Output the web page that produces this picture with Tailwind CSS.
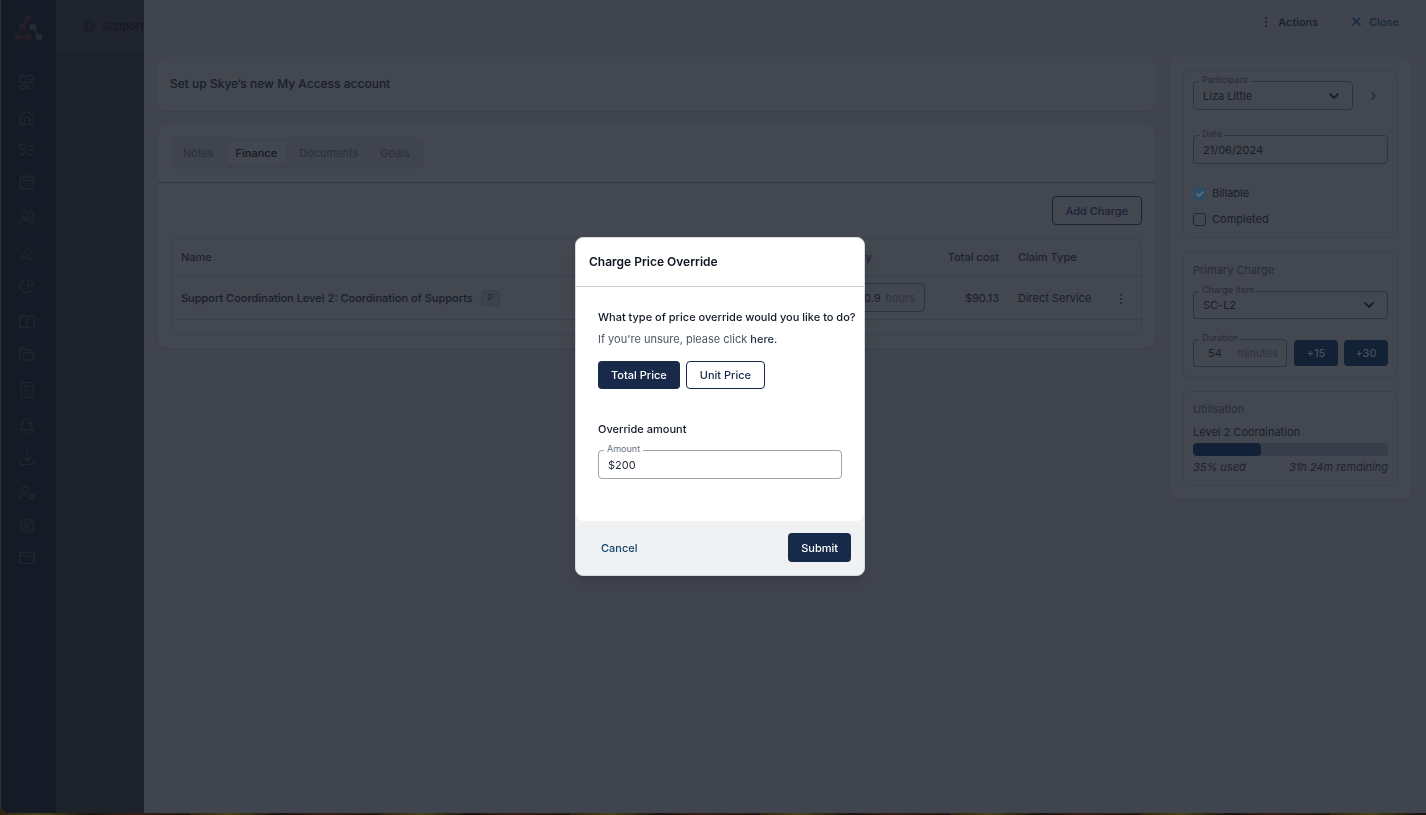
<!DOCTYPE html>
<html lang="en">

<head>
    <title>Support - Charge Price Override</title>

    <!-- Tailwind css-->
    <meta charset="UTF-8">
    <meta name="viewport" content="width=device-width, initial-scale=1.0">
    <script src="https://cdn.jsdelivr.net/npm/@tailwindcss/browser@4"></script>
</head>

<body class="h-screen overflow-hidden bg-[repeating-linear-gradient(90deg,#33240f_0px,#4a4213_40px,#1c160f_90px,#3a1f12_130px,#241a10_190px)] pb-[2px] font-['Inter',sans-serif] text-[11px] leading-4 text-[#191e2b]">

    <div class="flex h-full overflow-hidden rounded-bl-lg border-l border-[#2b303a] bg-[#1e222b]">

        <!-- Sidebar -->
        <nav class="flex w-[55px] shrink-0 flex-col items-center bg-[#151b26] pr-[3px] pt-3 text-[#202631]">
            <a href="#" aria-label="Home page" class="mb-[22px] flex h-8 items-center">
                <svg class="size-8" viewBox="0 0 32 32" fill="none" stroke-width="1.500">
                    <g stroke="#271f27" fill="#271f27">
                        <path d="M17 6 11.500 15 6 25h11" fill="none" />
                        <circle cx="17" cy="6" r="2.500" />
                        <circle cx="11.500" cy="15" r="2.500" />
                        <circle cx="6" cy="25" r="2.500" />
                        <circle cx="17" cy="25" r="2.500" />
                    </g>
                    <g stroke="#262c37" fill="#262c37">
                        <path d="M22 15l6 10" />
                        <circle cx="22" cy="15" r="2.500" />
                        <circle cx="28" cy="25" r="2.500" />
                    </g>
                </svg>
            </a>
            <div class="flex flex-col gap-1">
                <div>
                    <a href="#" aria-label="Dashboard" class="flex h-8 items-center"><svg class="size-4" viewBox="0 0 24 24" fill="none" stroke="currentColor" stroke-width="2"><rect x="2" y="2" width="8" height="11" rx="1" /><rect x="14" y="2" width="8" height="6" rx="1" /><rect x="14" y="12" width="8" height="10" rx="1" /><rect x="2" y="17" width="8" height="5" rx="1" /></svg></a>
                </div>
                <div>
                    <a href="#" aria-label="Home" class="flex h-8 items-center"><svg class="size-4" viewBox="0 0 24 24" fill="none" stroke="currentColor" stroke-width="2" stroke-linejoin="round"><path d="M2 9l10-7 10 7v11a2 2 0 0 1-2 2H4a2 2 0 0 1-2-2z" /><path d="M8 22v-7a4 4 0 0 1 8 0v7" /></svg></a>
                    <a href="#" aria-label="Tasks" class="flex h-8 items-center"><svg class="size-4" viewBox="0 0 24 24" fill="none" stroke="currentColor" stroke-width="2" stroke-linecap="round"><rect x="2" y="3" width="7" height="7" rx="1" /><path d="m2 17 3 3 5-5M13 5h9M13 12h9M13 19h9" /></svg></a>
                    <a href="#" aria-label="Calendar" class="flex h-8 items-center"><svg class="size-4" viewBox="0 0 24 24" fill="none" stroke="currentColor" stroke-width="2" stroke-linecap="round"><rect x="2" y="4" width="20" height="18" rx="2" /><path d="M7 1v5M17 1v5M12 1v5M2 10h20M7 14h.01M12 14h.01M17 14h.01M7 18h.01M12 18h.01M17 18h.01" /></svg></a>
                </div>
                <div>
                    <a href="#" aria-label="Participants" class="flex h-8 items-center"><svg class="size-4" viewBox="0 0 24 24" fill="none" stroke="currentColor" stroke-width="2" stroke-linecap="round"><circle cx="9" cy="7" r="5" /><path d="M1 22v-3a4 4 0 0 1 4-4h8a4 4 0 0 1 4 4v3M23 22v-3a4 4 0 0 0-3-4M17 2a5 5 0 0 1 0 10" /></svg></a>
                </div>
                <div>
                    <a href="#" aria-label="Signatures" class="flex h-8 items-center"><svg class="size-4" viewBox="0 0 24 24" fill="none" stroke="#1d232e" stroke-width="2" stroke-linecap="round" stroke-linejoin="round"><path d="M4 16 15 3a3 3 0 0 1 5 4L9 19l-5 2c-3-1 1-6 5-7s3 8 7 7 1-3 3-3 1 3 3 2" /></svg></a>
                    <a href="#" aria-label="Reports" class="flex h-8 items-center"><svg class="size-4" viewBox="0 0 24 24" fill="none" stroke="currentColor" stroke-width="2" stroke-linejoin="round"><path d="M13 2a10 10 0 0 1 9 10h-9z" /><path d="M8 3a10 10 0 1 0 13 13" /></svg></a>
                </div>
                <div>
                    <a href="#" aria-label="Price guide" class="flex h-8 items-center"><svg class="size-4" viewBox="0 0 24 24" fill="none" stroke="currentColor" stroke-width="2" stroke-linejoin="round"><path d="M1 3h7a4 4 0 0 1 4 3 4 4 0 0 1 4-3h7v17h-8a3 3 0 0 0-3 2 3 3 0 0 0-3-2H1zM12 6v16" /></svg></a>
                    <a href="#" aria-label="Files" class="flex h-8 items-center"><svg class="size-4" viewBox="0 0 24 24" fill="none" stroke="currentColor" stroke-width="2" stroke-linejoin="round"><path d="M19 21H4a3 3 0 0 1-3-3V3h7l3 3h8v4" /><path d="m5 17 2-5a3 3 0 0 1 3-2h13l-2 9a2 2 0 0 1-2 2" /></svg></a>
                </div>
                <div>
                    <a href="#" aria-label="Calculator" class="flex h-8 items-center"><svg class="size-4" viewBox="0 0 24 24" fill="none" stroke="currentColor" stroke-width="2" stroke-linecap="round"><rect x="3" y="1" width="18" height="22" rx="2" /><path d="M8 6h8M8 11h.01M12 11h.01M16 11h.01M8 15h.01M12 15h.01M16 15v4M8 19h4" /></svg></a>
                </div>
                <div>
                    <a href="#" aria-label="Reminders" class="flex h-8 items-center"><svg class="size-4" viewBox="0 0 24 24" fill="none" stroke="currentColor" stroke-width="2" stroke-linecap="round"><path d="M14 2a7 7 0 0 0-9 7c0 6-3 9-3 9h20s-2-2-3-5M10 23h4M18 4v8M14 8h8" /></svg></a>
                    <a href="#" aria-label="Downloads" class="flex h-8 items-center"><svg class="size-4" viewBox="0 0 24 24" fill="none" stroke="currentColor" stroke-width="2" stroke-linecap="round"><path d="M12 2v13M6 10l6 6 6-6M2 16v4a2 2 0 0 0 2 2h16a2 2 0 0 0 2-2v-4" /></svg></a>
                </div>
                <div>
                    <a href="#" aria-label="User settings" class="flex h-8 items-center"><svg class="size-4" viewBox="0 0 24 24" fill="none" stroke="currentColor" stroke-width="2" stroke-linecap="round"><circle cx="9" cy="6" r="5" /><path d="M1 22v-3a4 4 0 0 1 4-4h5" /><circle cx="19" cy="16" r="3" stroke-width="3" /></svg></a>
                    <a href="#" aria-label="Settings" class="flex h-8 items-center"><svg class="size-4" viewBox="0 0 24 24" fill="none" stroke="currentColor" stroke-width="2" stroke-linejoin="round"><circle cx="12" cy="12" r="3" /><path d="M10 2h4l1 3 2 1 3-1 2 4-2 2v2l2 2-2 4-3-1-2 1-1 3h-4l-1-3-2-1-3 1-2-4 2-2v-2L2 9l2-4 3 1 2-1z" /></svg></a>
                    <a href="#" aria-label="Billing" class="flex h-8 items-center"><svg class="size-4" viewBox="0 0 24 24" fill="none" stroke="currentColor" stroke-width="2"><rect x="1" y="4" width="22" height="16" rx="1" /><path d="M1 9h22" /></svg></a>
                </div>
            </div>
        </nav>

        <!-- Page behind the drawer -->
        <div class="w-[88px] shrink-0 overflow-hidden">
            <div class="flex h-[52px] items-center gap-[7px] border-b border-[#1c2029] bg-[#20242d] pl-[27px] text-[#131822]">
                <svg class="size-3 shrink-0" viewBox="0 0 24 24" fill="none" stroke="currentColor" stroke-width="2"><circle cx="12" cy="12" r="11" /><circle cx="12" cy="12" r="5" /><path d="m4 4 4 4M20 4l-4 4M4 20l4-4M20 20l-4-4" /></svg>
                <span>Support</span>
            </div>
        </div>

        <!-- Drawer -->
        <div class="flex min-w-0 flex-1 flex-col bg-[#40444e]">
            <header class="flex h-11 shrink-0 items-center justify-end gap-8 border-b border-t border-[#3c404a] pr-[27px] font-medium">
                <button class="flex items-center gap-[6px]">
                    <svg class="size-3" viewBox="0 0 12 12" fill="currentColor"><circle cx="6" cy="2" r="1" /><circle cx="6" cy="6" r="1" /><circle cx="6" cy="10" r="1" /></svg>
                    Actions
                </button>
                <button class="flex items-center gap-[7px] text-[#18293b]">
                    <svg class="size-3" viewBox="0 0 12 12" fill="none" stroke="currentColor" stroke-width="1.500" stroke-linecap="round"><path d="m3 2 7 7M10 2l-7 7" /></svg>
                    Close
                </button>
            </header>

            <div class="flex items-start gap-3.5 pl-[13px] pr-[15px] pt-[13px]">
                <main class="flex min-w-0 flex-1 flex-col gap-3.5">
                    <section class="flex h-[54px] items-center rounded-lg bg-[#43474f] px-[13px] shadow-xs">
                        <h1 class="text-xs font-medium">Set up Skye’s new My Access account</h1>
                    </section>

                    <section class="mx-px rounded-lg bg-[#43474f] shadow-xs">
                        <div class="border-b border-[#323743] px-[13px] pb-[13px] pt-3">
                            <div role="tablist" class="inline-flex gap-[5px] rounded-md bg-[#40444e] p-1 text-[#2a2f3b]">
                                <button role="tab" class="h-6 rounded px-2">Notes</button>
                                <button role="tab" aria-selected="true" class="h-6 rounded bg-[#43474f] px-[9px] font-medium text-[#141924] shadow-xs">Finance</button>
                                <button role="tab" class="h-6 rounded px-2">Documents</button>
                                <button role="tab" class="h-6 rounded px-[9px]">Goals</button>
                            </div>
                        </div>

                        <div class="flex flex-col gap-[13px] p-[13px]">
                            <button class="h-[29px] self-end rounded border border-[#1c2538] px-[13px] font-medium text-[#1c2338]">Add Charge</button>

                            <div class="rounded-md border border-[#3c414c] pb-3.5">
                                <table class="w-full table-fixed text-left">
                                    <thead>
                                        <tr class="h-[37px] border-b border-[#3a3f4b] text-[#1e2330]">
                                            <th class="px-[9px] font-medium">Name</th>
                                            <th class="w-20 px-[10px] font-medium">Unit price</th>
                                            <th class="w-[118px] px-[10px] font-medium">Quantity</th>
                                            <th class="w-[74px] whitespace-nowrap px-[10px] text-right font-medium">Total cost</th>
                                            <th class="w-[91px] px-[9px] font-medium">Claim Type</th>
                                            <th class="w-[41px]"></th>
                                        </tr>
                                    </thead>
                                    <tbody>
                                        <tr class="h-[43px] border-b border-[#3a3f4b]">
                                            <td class="px-[9px] font-medium">
                                                <div class="flex items-center gap-2">
                                                    Support Coordination Level 2: Coordination of Supports
                                                    <span class="rounded-sm border border-[#383d49] bg-[#3e424d] px-[6px] text-[9px] leading-[14px] text-[#222835]">P</span>
                                                </div>
                                            </td>
                                            <td class="px-[10px]">$100.14</td>
                                            <td class="px-[10px]">
                                                <div class="flex h-[29px] items-center rounded border border-[#2d3340] px-[9px]">
                                                    <input type="text" aria-label="Quantity" value="0.9" class="w-full min-w-0 pl-[27px] outline-none">
                                                    <span class="text-[#2f3440]">hours</span>
                                                </div>
                                            </td>
                                            <td class="px-[10px] text-right">$90.13</td>
                                            <td class="whitespace-nowrap px-[9px]">Direct Service</td>
                                            <td class="text-center">
                                                <button aria-label="Charge actions" class="align-middle text-[#16273a]"><svg class="size-3" viewBox="0 0 12 12" fill="currentColor"><circle cx="6" cy="2" r="1" /><circle cx="6" cy="6" r="1" /><circle cx="6" cy="10" r="1" /></svg></button>
                                            </td>
                                        </tr>
                                    </tbody>
                                </table>
                            </div>
                        </div>
                    </section>
                </main>

                <aside class="flex w-[241px] shrink-0 flex-col gap-[13px] rounded-lg bg-[#43474f] p-[13px] shadow-xs">
                    <section class="rounded-md border border-[#3c414c] px-[9px] py-[10px]">
                        <div class="flex items-center gap-3.5">
                            <div class="relative flex-1">
                                <label for="participant" class="absolute -top-[9px] left-[6px] bg-[#43474f] px-[3px] text-[9px] text-[#272c38]">Participant</label>
                                <select id="participant" class="h-[29px] w-full appearance-none rounded border border-[#2d3340] px-[9px]">
                                    <option>Liza Little</option>
                                </select>
                                <svg class="pointer-events-none absolute right-[13px] top-[9px] size-3" viewBox="0 0 12 12" fill="none" stroke="currentColor" stroke-width="1.800" stroke-linecap="round" stroke-linejoin="round"><path d="m2 4 4 4 4-4" /></svg>
                            </div>
                            <button aria-label="Open participant" class="mr-[9px] text-[#18293b]"><svg class="size-3" viewBox="0 0 12 12" fill="none" stroke="currentColor" stroke-width="1.200" stroke-linecap="round" stroke-linejoin="round"><path d="m5 3 3 3-3 3" /></svg></button>
                        </div>
                        <div class="relative mt-[25px]">
                            <label for="date" class="absolute -top-[9px] left-[6px] bg-[#43474f] px-[3px] text-[9px] text-[#272c38]">Date</label>
                            <input id="date" type="text" value="21/06/2024" class="block h-[29px] w-full rounded border border-[#2d3340] px-[9px]">
                        </div>
                        <label class="mt-[21px] flex items-center gap-[6px]">
                            <input type="checkbox" checked class="absolute size-[13px] appearance-none">
                            <svg class="size-[13px] rounded-[3px] bg-[#2d4d64]" viewBox="0 0 13 13" fill="none" stroke="#5d6974" stroke-width="1.800" stroke-linecap="round" stroke-linejoin="round"><path d="m4 7 2 2 4-4" /></svg>
                            Billable
                        </label>
                        <label class="mt-[10px] flex items-center gap-[6px]">
                            <input type="checkbox" class="size-[13px] appearance-none rounded-[3px] border border-[#202636]">
                            Completed
                        </label>
                    </section>

                    <section class="rounded-md border border-[#3c414c] px-[9px] py-[10px]">
                        <h2 class="text-[#272c38]">Primary Charge</h2>
                        <div class="relative mt-[13px]">
                            <label for="charge" class="absolute -top-[9px] left-[6px] bg-[#43474f] px-[3px] text-[9px] text-[#272c38]">Charge Item</label>
                            <select id="charge" class="block h-7 w-full appearance-none rounded border border-[#2d3340] px-[9px]">
                                <option>SC-L2</option>
                            </select>
                            <svg class="pointer-events-none absolute right-[13px] top-2 size-3" viewBox="0 0 12 12" fill="none" stroke="currentColor" stroke-width="1.800" stroke-linecap="round" stroke-linejoin="round"><path d="m2 4 4 4 4-4" /></svg>
                        </div>
                        <div class="mt-5 flex items-center gap-[6px]">
                            <div class="relative mr-px flex h-7 flex-1 items-center rounded border border-[#2d3340] pl-3.5 pr-2">
                                <label for="duration" class="absolute -top-[10px] left-[5px] bg-[#43474f] px-[3px] text-[9px] text-[#272c38]">Duration</label>
                                <input id="duration" type="text" value="54" class="w-full min-w-0 outline-none">
                                <span class="text-[#2f3440]">minutes</span>
                            </div>
                            <button class="h-[26px] w-11 rounded bg-[#122136] font-medium text-[#474f5d]">+15</button>
                            <button class="h-[26px] w-11 rounded bg-[#122136] font-medium text-[#474f5d]">+30</button>
                        </div>
                    </section>

                    <section class="rounded-md border border-[#3c414c] px-[9px] pb-[10px] pt-[9px]">
                        <h2 class="text-[#272c38]">Utilisation</h2>
                        <p class="mt-[7px]">Level 2 Coordination</p>
                        <div class="mt-[3px] h-[13px] overflow-hidden rounded bg-[#383d4a]">
                            <div class="h-full rounded bg-[#122136]" style="width: 35%"></div>
                        </div>
                        <div class="mt-[3px] flex justify-between italic text-[#1e2330]">
                            <span>35% used</span>
                            <span>31h 24m remaining</span>
                        </div>
                    </section>
                </aside>
            </div>
        </div>
    </div>

    <!-- Charge price override modal -->
    <div class="fixed inset-0 flex items-center justify-center pb-[2px] pl-3.5">
        <div role="dialog" aria-labelledby="modal-title" class="w-[290px] overflow-hidden rounded-lg border border-[#d5d8df] bg-[#f0f1f3] shadow-lg">
            <div class="rounded-b-lg bg-white">
                <div class="flex h-[49px] items-center border-b border-[#c6cad2] px-[13px]">
                    <h2 id="modal-title" class="text-xs font-semibold text-[#0f1522]">Charge Price Override</h2>
                </div>
                <div class="px-[22px] pb-[42px] pt-[22px]">
                    <p class="whitespace-nowrap font-medium text-[#111827]">What type of price override would you like to do?</p>
                    <p class="mt-[6px] text-[#4b5563]">If you're unsure, please click <a href="#" class="font-medium text-[#1f2a40]">here.</a></p>
                    <div class="mt-3.5 flex gap-[6px] font-medium">
                        <button class="h-7 rounded bg-[#172a4a] px-[13px] text-white">Total Price</button>
                        <button class="h-7 rounded border border-[#172a4a] px-[13px] text-[#172a4a]">Unit Price</button>
                    </div>
                    <h3 class="mt-8 font-medium text-[#111827]">Override amount</h3>
                    <div class="relative mt-[13px]">
                        <label for="amount" class="absolute -top-[9px] left-[6px] bg-white px-[3px] text-[9px] text-[#6b7280]">Amount</label>
                        <input id="amount" type="text" value="$200" class="block h-[29px] w-full rounded border border-[#9ca3af] px-[9px] text-[#1f2937]">
                    </div>
                </div>
            </div>
            <div class="flex items-center justify-between px-[13px] pb-[13px] pt-3 font-medium">
                <button class="px-3 text-[#12446b]">Cancel</button>
                <button class="h-[29px] rounded bg-[#172a4a] px-[13px] text-white">Submit</button>
            </div>
        </div>
    </div>
</body>

</html>
